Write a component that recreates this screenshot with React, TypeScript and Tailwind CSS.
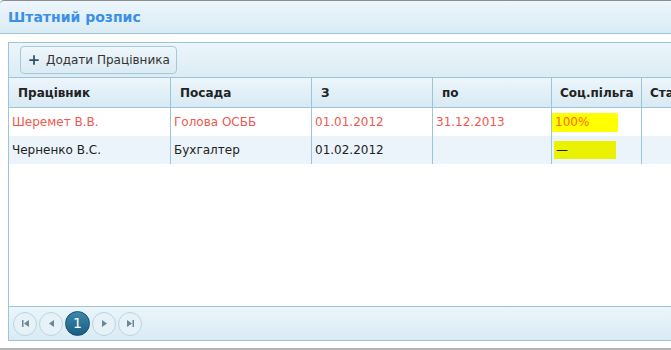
import {Plus} from 'lucide-react';

const cols = [
  {title: 'Працівник', w: 'w-[162px]', hp: 'pl-[9px]'},
  {title: 'Посада', w: 'w-[141px]', hp: 'pl-[9px]'},
  {title: 'З', w: 'w-[121px]', hp: 'pl-[9px]'},
  {title: 'по', w: 'w-[119px]', hp: 'pl-[9px]'},
  {title: 'Соц.пільга', w: 'w-[90px]', hp: 'pl-[8px]'},
  {title: 'Ставка', w: 'w-[80px]', hp: 'pl-[8px]'}
];

const rows = [
  {cells: ['Шеремет В.В.', 'Голова ОСББ', '01.01.2012', '31.12.2013'], benefit: '100%', red: true},
  {cells: ['Черненко В.С.', 'Бухгалтер', '01.02.2012', ''], benefit: '—', red: false}
];

const PagerBtn = ({children}: {children: React.ReactNode}) => (
  <div className="w-[24px] h-[24px] rounded-full border border-[#b7d6e3] bg-[#e6f1f8] flex items-center justify-center text-[#6a8796]">
    {children}
  </div>
);

export default function App() {
  return (
    <div
      className="w-[671px] h-[350px] overflow-hidden bg-white flex flex-col"
      style={{fontFamily: '"DejaVu Sans", Verdana, sans-serif'}}
    >
      <div className="h-[34px] shrink-0 border-t border-[#8c8c8c] border-b border-b-[#9cc6d8] bg-gradient-to-b from-[#edf6fc] to-[#d9ebf5] rounded-tl-[4px] flex items-center pl-[8px]">
        <span className="text-[14px] font-bold text-[#3b8fe8]">Штатний розпис</span>
      </div>
      <div className="h-[8px] shrink-0" />
      <div className="ml-[8px] h-[299px] shrink-0 border-l border-t border-b border-[#9cc6d8] flex flex-col">
        <div className="h-[34px] shrink-0 bg-gradient-to-b from-[#ecf5fb] to-[#dbecf5] flex items-center pl-[11px]">
          <button className="h-[28px] px-[6px] flex items-center gap-[5px] rounded-[4px] border border-[#a6c8d7] bg-gradient-to-b from-[#eef6fb] to-[#dcebf4] text-[12px] text-[#333]">
            <Plus size={14} strokeWidth={3} className="text-[#2d5264]" />
            <span>Додати Працівника</span>
          </button>
        </div>
        <div className="h-[31px] shrink-0 flex border-t border-b border-[#9cc6d8] bg-gradient-to-b from-[#ecf5fb] to-[#d8eaf4]">
          {cols.map((c, i) => (
            <div
              key={c.title}
              className={`${c.w} ${c.hp} shrink-0 flex items-center text-[12px] font-bold text-[#222] ${i < cols.length - 1 ? 'border-r border-[#9cc6d8]' : ''}`}
            >
              {c.title}
            </div>
          ))}
        </div>
        <div className="flex-1">
          {rows.map((r, ri) => (
            <div key={ri} className={`h-[28px] flex ${ri === 1 ? 'bg-[#ebf4fa]' : 'bg-white'}`}>
              {r.cells.map((t, ci) => (
                <div
                  key={ci}
                  className={`${cols[ci].w} shrink-0 flex items-center pl-[3px] text-[12px] border-r border-[#9cc6d8] ${r.red ? 'text-[#f0574f]' : 'text-[#222]'}`}
                >
                  {t}
                </div>
              ))}
              <div className="w-[90px] shrink-0 flex items-center border-r border-[#9cc6d8]">
                {r.red ? (
                  <span className="w-[66px] h-[19px] bg-[#ffff00] rounded-tr-[2px] flex items-center pl-[3px] text-[12px] text-[#ff6a00]">
                    {r.benefit}
                  </span>
                ) : (
                  <span className="ml-[2px] w-[62px] h-[18px] bg-[#ebf200] flex items-center pl-[2px] text-[12px] text-[#222]">
                    {r.benefit}
                  </span>
                )}
              </div>
              <div className="w-[80px] shrink-0" />
            </div>
          ))}
        </div>
        <div className="h-[34px] shrink-0 border-t border-[#9cc6d8] bg-gradient-to-b from-[#ecf5fb] to-[#d9eaf4] flex items-center pl-[4px] gap-[2px]">
          <PagerBtn>
            <svg width="9" height="9" viewBox="0 0 9 9"><rect x="1" y="1" width="1.5" height="7" fill="currentColor" /><path d="M8 1 L3 4.5 L8 8 Z" fill="currentColor" /></svg>
          </PagerBtn>
          <PagerBtn>
            <svg width="9" height="9" viewBox="0 0 9 9"><path d="M7 1 L2 4.5 L7 8 Z" fill="currentColor" /></svg>
          </PagerBtn>
          <div className="w-[25px] h-[25px] rounded-full bg-gradient-to-b from-[#3d88ad] to-[#175e82] border border-[#14506f] flex items-center justify-center text-white text-[14px]">
            1
          </div>
          <PagerBtn>
            <svg width="9" height="9" viewBox="0 0 9 9"><path d="M2 1 L7 4.5 L2 8 Z" fill="currentColor" /></svg>
          </PagerBtn>
          <PagerBtn>
            <svg width="9" height="9" viewBox="0 0 9 9"><path d="M1 1 L6 4.5 L1 8 Z" fill="currentColor" /><rect x="6.5" y="1" width="1.5" height="7" fill="currentColor" /></svg>
          </PagerBtn>
        </div>
      </div>
      <div className="h-[7px] shrink-0" />
      <div className="h-[2px] shrink-0 bg-[#b5b5b5]" />
    </div>
  );
}
